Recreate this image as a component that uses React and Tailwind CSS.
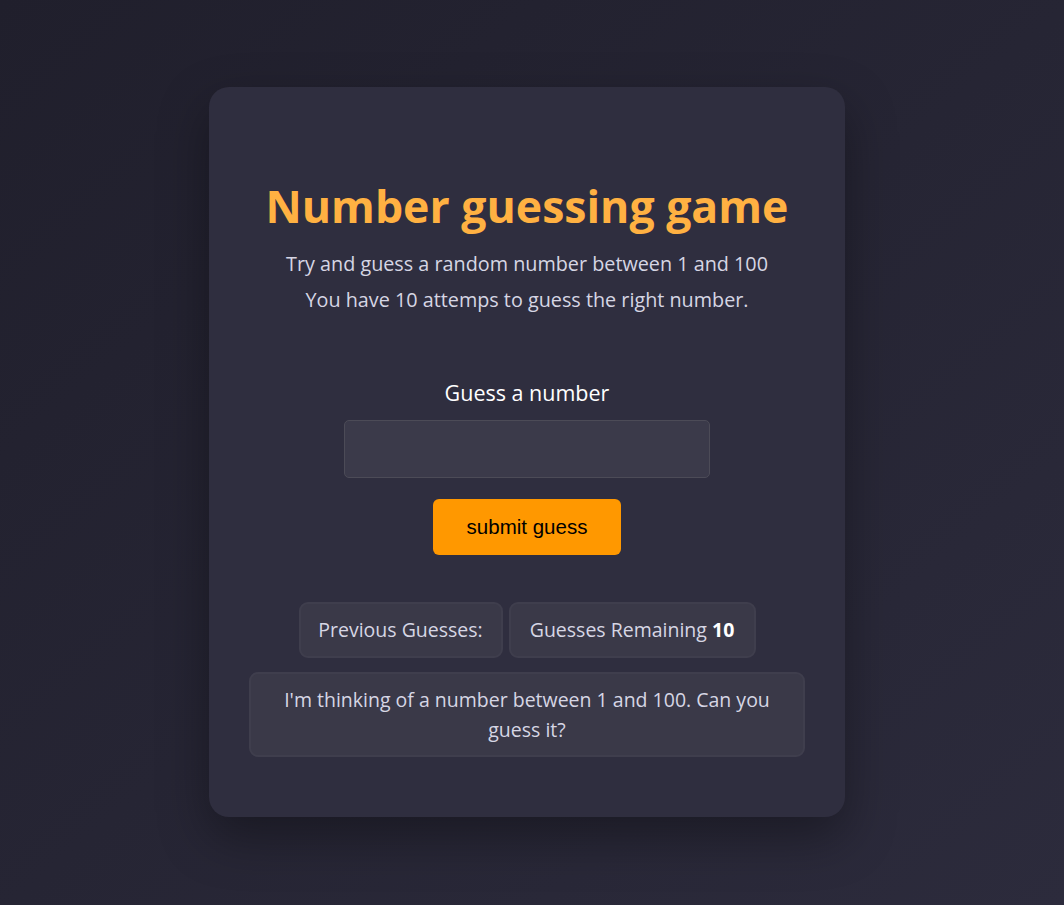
import React from 'react';

const App = () => {
  return (
    <div className="min-h-screen w-full bg-gradient-to-br from-[#201f2c] to-[#2c2b3c] flex justify-center pt-[87px] pr-[10px] font-['Open_Sans',sans-serif]">
      <div className="w-[636px] h-[730px] rounded-[20px] bg-[#2f2e3f] shadow-[0_20px_50px_rgba(0,0,0,0.35)] flex flex-col items-center">
        {/* Heading */}
        <h1 className="mt-[92px] text-[44.6px] leading-[53px] font-bold text-[#ffb142]">
          Number guessing game
        </h1>
        <p className="mt-[14px] text-[19.8px] leading-[36px] text-[#d6d6e4] text-center">
          Try and guess a random number between 1 and 100
          <br />
          You have 10 attemps to guess the right number.
        </p>

        {/* Form */}
        <label className="mt-[60px] text-[21.5px] leading-[30px] text-white">Guess a number</label>
        <input
          type="number"
          className="mt-[12px] w-[366px] h-[58px] rounded-[5px] bg-[#3b3a4a] border border-[#4c4b57] outline-none text-white px-3"
        />
        <button className="mt-[21px] w-[188px] h-[56px] rounded-[6px] bg-[#ff9800] text-black text-[20.5px] font-['Liberation_Sans',sans-serif]">
          submit guess
        </button>

        {/* Stats */}
        <div className="mt-[47px] flex gap-[6px]">
          <div className="w-[204px] h-[56px] flex items-center justify-center rounded-[9px] bg-[#3a3948] border-2 border-[#3f3e4d] text-[19.5px] text-[#d6d6e4]">
            Previous Guesses:
          </div>
          <div className="w-[247px] h-[56px] flex items-center justify-center rounded-[9px] bg-[#3a3948] border-2 border-[#3f3e4d] text-[19.5px] text-[#d6d6e4]">
            Guesses Remaining&nbsp;<span className="font-bold text-white">10</span>
          </div>
        </div>
        <div className="mt-[14px] w-[556px] h-[85px] px-[22px] flex items-center justify-center rounded-[9px] bg-[#3a3948] border-2 border-[#3f3e4d] text-[19.5px] leading-[30px] text-[#d6d6e4] text-center">
          I'm thinking of a number between 1 and 100. Can you guess it?
        </div>
      </div>
    </div>
  );
};

export default App;
